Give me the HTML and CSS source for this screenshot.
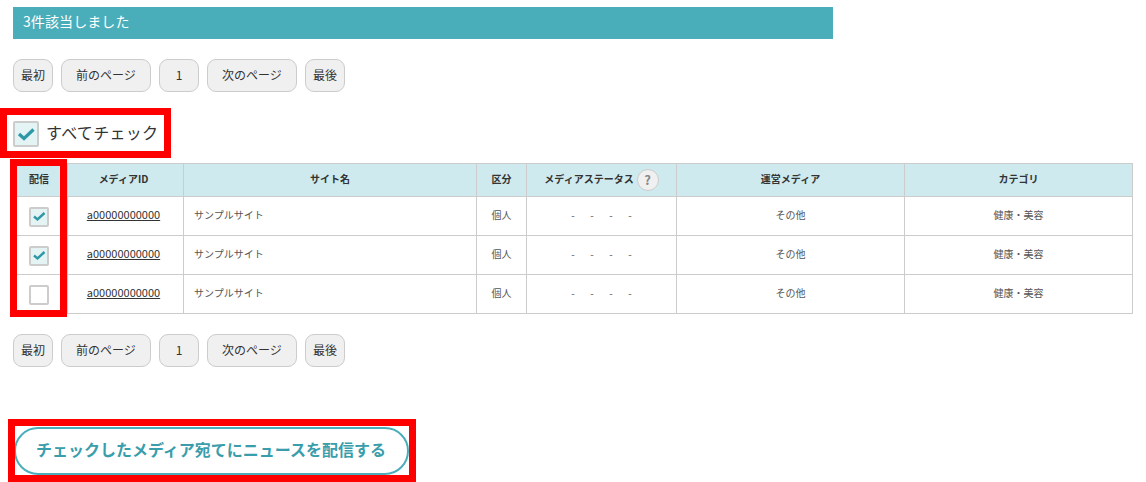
FILE: index.html
```html
<!DOCTYPE html>
<html lang="ja">
<head>
<meta charset="utf-8">
<title>メディア検索結果</title>
<link rel="stylesheet" href="styles.css">
</head>
<body>
<main class="page">
  <div class="result-bar">3件該当しました</div>

  <nav class="pager pager-top">
    <button class="pg pg-s">最初</button>
    <button class="pg pg-l">前のページ</button>
    <button class="pg pg-s">1</button>
    <button class="pg pg-l">次のページ</button>
    <button class="pg pg-s">最後</button>
  </nav>

  <div class="check-all">
    <span class="cb cb-big">
      <svg viewBox="0 0 22 22" class="tick tick-big"><path d="M4 11 L9 15.5 L18.5 6.5"/></svg>
    </span>
    <span class="check-all-label">すべてチェック</span>
    <span class="mark mark-all"></span>
  </div>

  <div class="table-wrap">
    <table class="media">
      <colgroup>
        <col class="c1"><col class="c2"><col class="c3"><col class="c4"><col class="c5"><col class="c6"><col class="c7">
      </colgroup>
      <thead>
        <tr>
          <th>配信</th>
          <th class="id-col">メディアID</th>
          <th>サイト名</th>
          <th>区分</th>
          <th><span class="th-status">メディアステータス<span class="help">?</span></span></th>
          <th>運営メディア</th>
          <th>カテゴリ</th>
        </tr>
      </thead>
      <tbody>
        <tr>
          <td class="check-cell"><span class="cb cb-small"><svg viewBox="0 0 16 16" class="tick"><path d="M3 7.5 L6.5 10.5 L13.5 4"/></svg></span></td>
          <td class="id-col"><a href="#" class="id-link">a00000000000</a></td>
          <td class="left">サンプルサイト</td>
          <td>個人</td>
          <td><span class="dashes"><span>-</span><span>-</span><span>-</span><span>-</span></span></td>
          <td>その他</td>
          <td>健康・美容</td>
        </tr>
        <tr>
          <td class="check-cell"><span class="cb cb-small"><svg viewBox="0 0 16 16" class="tick"><path d="M3 7.5 L6.5 10.5 L13.5 4"/></svg></span></td>
          <td class="id-col"><a href="#" class="id-link">a00000000000</a></td>
          <td class="left">サンプルサイト</td>
          <td>個人</td>
          <td><span class="dashes"><span>-</span><span>-</span><span>-</span><span>-</span></span></td>
          <td>その他</td>
          <td>健康・美容</td>
        </tr>
        <tr>
          <td class="check-cell"><span class="cb cb-small cb-off"></span></td>
          <td class="id-col"><a href="#" class="id-link">a00000000000</a></td>
          <td class="left">サンプルサイト</td>
          <td>個人</td>
          <td><span class="dashes"><span>-</span><span>-</span><span>-</span><span>-</span></span></td>
          <td>その他</td>
          <td>健康・美容</td>
        </tr>
      </tbody>
    </table>
    <span class="mark mark-col"></span>
  </div>

  <nav class="pager pager-bottom">
    <button class="pg pg-s">最初</button>
    <button class="pg pg-l">前のページ</button>
    <button class="pg pg-s">1</button>
    <button class="pg pg-l">次のページ</button>
    <button class="pg pg-s">最後</button>
  </nav>

  <div class="send-wrap">
    <button class="send">チェックしたメディア宛てにニュースを配信する</button>
    <span class="mark mark-send"></span>
  </div>
</main>
</body>
</html>
```

FILE: styles.css
```css
* { box-sizing: border-box; }
html, body { margin: 0; padding: 0; background: #fff; height: 482px; overflow: hidden; }
body {
  font-family: "Noto Sans CJK JP", "Noto Sans", sans-serif;
  color: #333;
}
.page { padding: 7px 13px 0; width: 1146px; }

.result-bar {
  width: 820px;
  height: 32px;
  line-height: 28px;
  padding-left: 10px;
  background: #4aaeba;
  color: #fff;
  font-size: 14px;
  letter-spacing: 0.1px;
}

.pager { display: flex; gap: 8px; }
.pager-top { margin-top: 20px; }
.pager-bottom { margin-top: 20px; }
.pg {
  height: 33px;
  padding: 0 0 2px;
  border: 1px solid #ccc;
  border-radius: 9px;
  background: #f0f0f0;
  color: #333;
  font: 12px "Noto Sans CJK JP", sans-serif;
}
.pg-s { width: 40px; }
.pg-l { width: 90px; }

.check-all {
  position: relative;
  display: flex;
  align-items: center;
  margin-top: 29px;
  height: 26px;
  gap: 7px;
}
.check-all-label { font-size: 16px; color: #333; padding-bottom: 4px; letter-spacing: 0.3px; }

.cb {
  display: inline-flex;
  align-items: center;
  justify-content: center;
  border: 2px solid #ccc;
  border-radius: 2px;
  background: #e4f3f4;
}
.cb-big { width: 26px; height: 26px; }
.cb-small { width: 20px; height: 20px; vertical-align: middle; }
.cb-off { background: #fff; }
.tick { display: block; width: 100%; height: 100%; }
.tick path { fill: none; stroke: #2f98a6; stroke-width: 2.4; }
.tick-big path { stroke-width: 3.2; }

.table-wrap { position: relative; margin-top: 16px; }
.media {
  border-collapse: collapse;
  table-layout: fixed;
  width: 1122px;
  margin-left: -3px;
  font-size: 10px;
}
.c1 { width: 57px; }
.c2 { width: 116px; }
.c3 { width: 293px; }
.c4 { width: 50px; }
.c5 { width: 150px; }
.c6 { width: 228px; }
.c7 { width: 228px; }
.media th, .media td {
  border: 1px solid #ccc;
  padding: 0 0 4px;
  text-align: center;
  vertical-align: middle;
}
.media th {
  height: 33px;
  background: #ceeaef;
  font-weight: 700;
  color: #333;
}
.media td { height: 39px; color: #555; }
.media td.left { text-align: left; padding-left: 10px; }
.media td.check-cell { padding: 1px 0 0; }
.media .id-col { padding-right: 4px; }
.id-link { color: #333; font-size: 11px; text-decoration: underline; }
.th-status { display: inline-flex; align-items: center; gap: 3px; }
.help {
  display: inline-flex;
  align-items: center;
  justify-content: center;
  width: 22px;
  height: 22px;
  margin-bottom: -4px;
  padding-bottom: 2px;
  border: 1px solid #ccc;
  border-radius: 50%;
  background: #f0f0f0;
  color: #888;
  font-size: 13px;
}
.dashes { display: inline-flex; gap: 15.5px; }

.send-wrap { position: relative; margin-top: 60px; }
.send {
  display: block;
  width: 395px;
  height: 48px;
  margin-left: 1px;
  padding: 0 1px 5px 0;
  border: 2px solid #4aaeba;
  border-radius: 24px;
  background: #fff;
  color: #3a9dab;
  font: 700 16px "Noto Sans CJK JP", sans-serif;
}

.mark { position: absolute; border: 7px solid #f00; pointer-events: none; }
.mark-all { left: -13px; top: -13px; width: 171px; height: 50px; }
.mark-col { left: -3px; top: -4px; width: 57px; height: 158px; }
.mark-send { left: -5px; top: -8px; width: 408px; height: 63px; }
```
